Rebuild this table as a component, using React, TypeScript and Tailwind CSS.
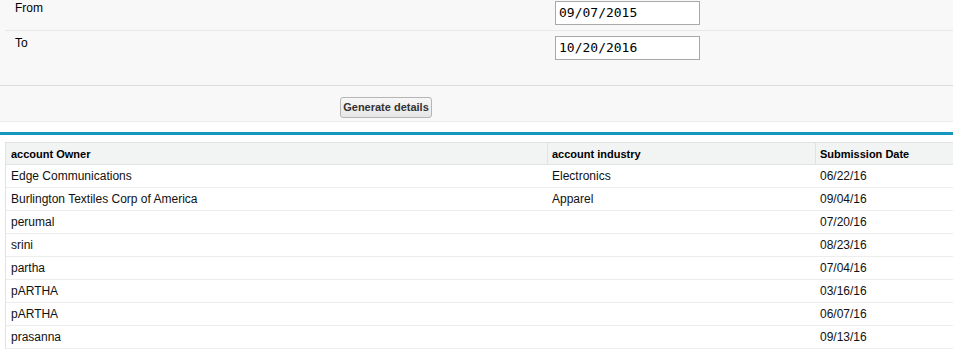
import React from 'react';

const rows = [
  { owner: 'Edge Communications', industry: 'Electronics', date: '06/22/16' },
  { owner: 'Burlington Textiles Corp of America', industry: 'Apparel', date: '09/04/16' },
  { owner: 'perumal', industry: '', date: '07/20/16' },
  { owner: 'srini', industry: '', date: '08/23/16' },
  { owner: 'partha', industry: '', date: '07/04/16' },
  { owner: 'pARTHA', industry: '', date: '03/16/16' },
  { owner: 'pARTHA', industry: '', date: '06/07/16' },
  { owner: 'prasanna', industry: '', date: '09/13/16' },
];

function DateBox({ value }: { value: string }) {
  return (
    <div className="ml-auto mr-[253px] w-[145px] h-[24px] border border-[#a9a9a9] bg-white pl-[3px] flex items-center text-[13px] text-black font-['DejaVu_Sans_Mono',monospace]">
      {value}
    </div>
  );
}

export default function App() {
  return (
    <div className="w-[953px] h-[349px] overflow-hidden bg-white font-['Liberation_Sans',Arial,sans-serif]">
      {/* Filter block */}
      <div className="bg-[#f8f8f8]">
        <div className="ml-[5px] flex items-start pt-px pb-[5px] border-b border-[#e8e8e8]">
          <span className="pl-[10px] text-[12px] leading-[14px] text-black">From</span>
          <DateBox value="09/07/2015" />
        </div>
        <div className="ml-[5px] flex items-start pt-[5px] h-[54px]">
          <span className="pl-[10px] text-[12px] leading-[14px] text-black">To</span>
          <DateBox value="10/20/2016" />
        </div>
        <div className="border-t border-[#dcdcdc] border-b border-b-[#ebebeb] h-[37px] pt-[8px] pl-[340px]">
          <button className="h-[21px] w-[92px] rounded-[3px] border border-[#b5b5b5] bg-gradient-to-b from-[#f7f7f7] to-[#e6e6e6] text-[11px] font-bold text-[#333] leading-none">
            Generate details
          </button>
        </div>
      </div>

      <div className="h-[10px] bg-white" />
      <div className="h-[3px] bg-[#1797c0]" />
      <div className="h-[7px] bg-white" />

      {/* Results table */}
      <div className="ml-[5px] w-[958px] border-l border-t border-[#e0e3e5]">
        <div className="grid grid-cols-[541px_268px_1fr] h-[22px] bg-[#f2f3f3] border-b border-[#e0e3e5] text-[11px] font-bold text-black">
          <div className="flex items-center pl-[5px] pt-px">account Owner</div>
          <div className="flex items-center pl-[4px] pt-px border-l border-[#e0e3e5]">account industry</div>
          <div className="flex items-center pl-[4px] pt-px border-l border-[#e0e3e5]">Submission Date</div>
        </div>
        {rows.map((r, i) => (
          <div
            key={i}
            className="grid grid-cols-[541px_268px_1fr] h-[23px] border-b border-[#ededed] text-[12px] text-[#111]"
          >
            <div className="flex items-center pl-[5px]">{r.owner}</div>
            <div className="flex items-center pl-[5px]">{r.industry}</div>
            <div className="flex items-center pl-[5px]">{r.date}</div>
          </div>
        ))}
      </div>
    </div>
  );
}
